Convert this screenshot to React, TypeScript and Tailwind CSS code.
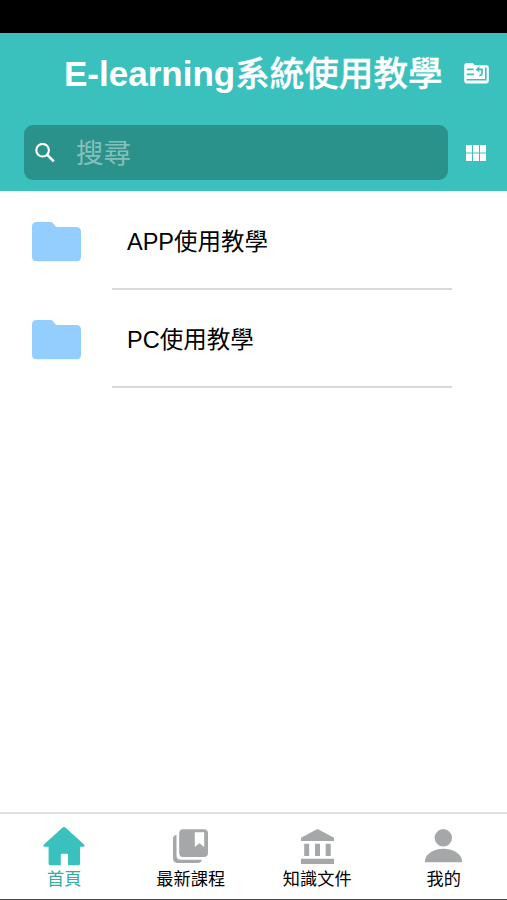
import React from 'react'

interface Course {
    latin: string
    title: string
}

interface Tab {
    label: string
    icon: React.ReactNode
    active?: boolean
}

const FolderBackIcon = () => (
    <svg className="h-[21px] w-[25px]" viewBox="0 0 25 21">
        <path
            fill="white"
            d="M2.5 0H8.6L11 2.2H22.5Q24.8 2.2 24.8 4.5V18Q24.8 20.4 22.5 20.4H2.5Q.2 20.4 .2 18V2.5Q.2 0 2.5 0Z"
        />
        <g stroke="#3bc1bd" fill="none">
            <path d="M2.8 6.4H9.6M2.8 11.4H10" strokeWidth="1.8" />
            <path d="M2.6 16.7H21.8V4.6" strokeWidth="1.6" />
            <path d="M14.5 6.4H18V10Q18 12.3 15.4 12.6" strokeWidth="1.7" />
        </g>
        <path d="M11.6 6.4L15.4 3.2V9.6Z" fill="#3bc1bd" />
    </svg>
)

const GridIcon = () => (
    <svg className="h-4 w-5" viewBox="0 0 20 16" fill="white">
        <path d="M0 0h6v7.4H0zM7 0h6v7.4H7zM14 0h6v7.4h-6zM0 8.6h6V16H0zM7 8.6h6V16H7zM14 8.6h6V16h-6z" />
    </svg>
)

const SearchIcon = () => (
    <svg className="h-5 w-5" viewBox="0 0 20 20" fill="none" stroke="white">
        <circle cx="7.6" cy="7.2" r="6.3" strokeWidth="2.1" />
        <path d="M12 11.6L18.8 18.4" strokeWidth="2.7" />
    </svg>
)

const FolderIcon = () => (
    <svg className="h-10 w-[49px] shrink-0" viewBox="0 0 49 40" fill="#93ceff">
        <path d="M4.5 0H18.5Q20 0 21 1.2L23.2 3.9Q24.2 5.1 26 5.1H44Q49 5.1 49 9.8V34.8Q49 39.3 44.5 39.3H4.5Q0 39.3 0 34.8V4.7Q0 0 4.5 0Z" />
    </svg>
)

const HomeIcon = () => (
    <svg className="h-[39px] w-[42px]" viewBox="0 0 42 39" fill="#3bc1bd">
        <path d="M19.3 .8Q21 -.6 22.7 .8L40.8 17.2Q42.2 18.6 40.8 19.8H37.1V36.5Q37.1 38.2 35.4 38.2H25V28.2Q25 26.8 23.6 26.8H19.2Q17.8 26.8 17.8 28.2V38.2H7.2Q5.6 38.2 5.6 36.5V19.8H1.2Q-.4 18.6 1.2 17.2Z" />
    </svg>
)

const LibraryIcon = () => (
    <svg className="h-[35px] w-[35px]" viewBox="0 0 35 35" fill="#a5a8a8">
        <path
            fillRule="evenodd"
            d="M10.2 .2H31Q35 .2 35 4.2V24Q35 28 31 28H10.2Q6.2 28 6.2 24V4.2Q6.2 .2 10.2 .2ZM21.8 3.3V18L26.5 14.2L31.2 18V3.3Z"
        />
        <path d="M0 8.5Q.8 6.2 3.5 5.7V26.5Q3.5 30.8 8 30.8H29Q28 34 24.5 34H5Q0 34 0 29Z" />
    </svg>
)

const BankIcon = () => (
    <svg className="h-[35px] w-[33px]" viewBox="0 0 33 35" fill="#a5a8a8">
        <path d="M16.5 0L33 8.7V12H0V8.7ZM3.2 14.8h5V27h-5zM14 14.8h5V27h-5zM24.7 14.8h5V27h-5zM0 29.8h33V35H0z" />
    </svg>
)

const PersonIcon = () => (
    <svg className="h-[34px] w-[37px]" viewBox="0 0 37 34" fill="#a5a7a9">
        <circle cx="18.3" cy="8.8" r="8.7" />
        <path d="M0 33.2V31C1.5 24.2 9.5 19.8 18.5 19.8S35.5 24.2 37 31V33.2Z" />
    </svg>
)

const courses: Course[] = [
    { latin: 'APP', title: '使用教學' },
    { latin: 'PC', title: '使用教學' },
]

const tabs: Tab[] = [
    { label: '首頁', icon: <HomeIcon />, active: true },
    { label: '最新課程', icon: <LibraryIcon /> },
    { label: '知識文件', icon: <BankIcon /> },
    { label: '我的', icon: <PersonIcon /> },
]

export default function App() {
    return (
        <div className="flex h-[900px] w-[507px] flex-col overflow-hidden bg-white font-['Liberation_Sans','Noto_Sans_CJK_TC',sans-serif] text-black">
            {/* Status bar */}
            <div className="h-[33px] shrink-0 bg-black" />

            <header className="h-[158px] shrink-0 bg-[#3bc1bd]">
                <div className="flex h-[92px] items-start pt-[18px] pl-[64px]">
                    <h1 className="w-[400px] text-[35px] leading-[46px] font-bold whitespace-nowrap text-white">
                        E-learning
                        <span className="text-[34.6px] font-medium [-webkit-text-stroke:0.3px_white]">系統使用教學</span>
                    </h1>
                    <button className="mt-[12px]" aria-label="資料夾">
                        <FolderBackIcon />
                    </button>
                </div>
                <div className="flex items-center pl-6">
                    <div className="flex h-[55px] w-[424px] items-center rounded-[9px] bg-[#2a918b] pl-[11px]">
                        <SearchIcon />
                        <span className="mt-[3px] ml-[21px] text-[27.5px] leading-10 text-[#83c0bb]">搜尋</span>
                    </div>
                    <button className="ml-[18px]" aria-label="格狀檢視">
                        <GridIcon />
                    </button>
                </div>
            </header>

            <main className="flex-1 pt-px">
                {courses.map((course) => (
                    <div key={course.latin} className="flex h-[98px] pl-8">
                        <div className="pt-[30px]">
                            <FolderIcon />
                        </div>
                        <div className="ml-[31px] w-[340px] border-b-2 border-[#d9d9d9] pt-[34px] pl-[15px] text-[23.5px] leading-8">
                            {course.latin}
                            {course.title}
                        </div>
                    </div>
                ))}
            </main>

            <nav className="grid h-[88px] shrink-0 grid-cols-4 border-t-2 border-b border-t-[#dfdfdf] border-b-[#444444] pl-px">
                {tabs.map((tab) => (
                    <div key={tab.label} className="flex flex-col items-center pt-3">
                        <div className="flex h-[40px] items-center">{tab.icon}</div>
                        <span
                            className={
                                tab.active
                                    ? 'mt-px text-[17.2px] leading-6 text-[#35aaa3]'
                                    : 'mt-px text-[17.2px] leading-6'
                            }
                        >
                            {tab.label}
                        </span>
                    </div>
                ))}
            </nav>
        </div>
    )
}
